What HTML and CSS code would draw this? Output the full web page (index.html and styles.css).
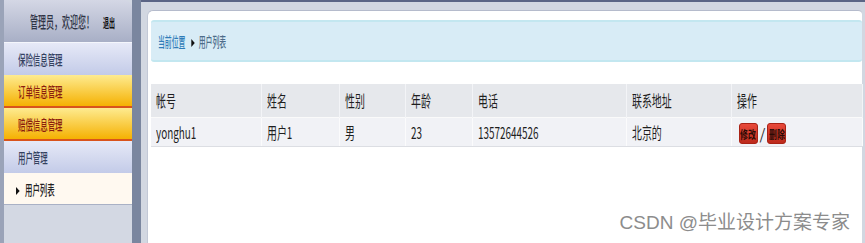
FILE: index.html
```html
<!DOCTYPE html>
<html lang="zh-CN">
<head>
    <meta charset="UTF-8">
    <title>用户列表</title>
    <link rel="stylesheet" href="styles.css">
</head>
<body>
    <div class="page">
        <aside class="sidebar">
            <div class="side-head">
                <span class="sq head-text">管理员，欢迎您！<a class="logout" href="#">退出</a></span>
            </div>
            <ul class="menu">
                <li class="menu-item blue first"><span class="sq">保险信息管理</span></li>
                <li class="menu-item orange"><span class="sq">订单信息管理</span></li>
                <li class="menu-item orange"><span class="sq">赔偿信息管理</span></li>
                <li class="menu-item blue"><span class="sq">用户管理</span></li>
                <li class="menu-item current"><span class="sq"><i class="tri"></i>用户列表</span></li>
            </ul>
        </aside>

        <div class="gutter"></div>

        <main class="main">
            <div class="content">
                <!-- 当前位置 -->
                <div class="crumb">
                    <span class="sq"><span class="here">当前位置</span><i class="tri crumb-tri"></i><span class="crumb-cur">用户列表</span></span>
                </div>

                <table class="user-table">
                    <colgroup>
                        <col style="width:110px">
                        <col style="width:78px">
                        <col style="width:66px">
                        <col style="width:67px">
                        <col style="width:154px">
                        <col style="width:105px">
                        <col style="width:131px">
                    </colgroup>
                    <tr>
                        <th><span class="sq">帐号</span></th>
                        <th><span class="sq">姓名</span></th>
                        <th><span class="sq">性别</span></th>
                        <th><span class="sq">年龄</span></th>
                        <th><span class="sq">电话</span></th>
                        <th><span class="sq">联系地址</span></th>
                        <th><span class="sq">操作</span></th>
                    </tr>
                    <tr>
                        <td><span class="sq">yonghu1</span></td>
                        <td><span class="sq">用户1</span></td>
                        <td><span class="sq">男</span></td>
                        <td><span class="sq">23</span></td>
                        <td><span class="sq">13572644526</span></td>
                        <td><span class="sq">北京的</span></td>
                        <td class="ops"><a class="btn" href="#"><span>修改</span></a><span class="slash">/</span><a class="btn" href="#"><span>删除</span></a></td>
                    </tr>
                </table>
            </div>
        </main>
    </div>

    <div class="watermark">CSDN @毕业设计方案专家</div>
</body>
</html>
```

FILE: styles.css
```css
* {
    box-sizing: border-box;
}
body {
    margin: 0;
    font-family: "Noto Sans CJK SC", "Microsoft YaHei", sans-serif;
    background: #7a869f;
    overflow: hidden;
}
.page {
    display: flex;
    height: 100vh;
}
/* 压扁的文字 */
.sq {
    display: inline-block;
    white-space: nowrap;
    transform-origin: left center;
}

/* 左侧菜单 */
.sidebar {
    flex: 0 0 132px;
    width: 132px;
    min-width: 0;
    overflow: hidden;
    border-left: 4px solid #9aa3b8;
    background: #d3d8e3;
    display: flex;
    flex-direction: column;
}
.side-head {
    height: 42px;
    border-top-right-radius: 8px;
    background: linear-gradient(#d4d7e5, #a8afc6);
    display: flex;
    align-items: center;
    padding-left: 26px;
}
.head-text {
    font-size: 16px;
    font-weight: 500;
    color: #2f3446;
    transform: scaleX(.5);
}
.logout {
    font-size: 12px;
    font-weight: bold;
    margin-left: 18px;
    color: #111;
    text-decoration: none;
}
.menu {
    list-style: none;
    margin: 0;
    padding: 0;
}
.menu-item {
    height: 32px;
    display: flex;
    align-items: center;
    padding-left: 14px;
    font-size: 14px;
    font-weight: 500;
}
.menu-item .sq {
    transform: scaleX(.53);
}
.menu-item.blue {
    background: linear-gradient(#e6e9f7, #c3cbe8);
    color: #34415f;
}
.menu-item.first {
    height: 33px;
    border-top: 1px solid #f4f6fc;
}
.menu-item.orange {
    height: 33px;
    background: linear-gradient(#feeb90, #f5b102);
    border-bottom: 2px solid #d9531c;
    color: #8c1e0e;
}
.menu-item.current {
    background: #fff9f0;
    border-bottom: 1px solid #a9b1c5;
    color: #222;
    padding-left: 12px;
}
.tri {
    display: inline-block;
    width: 0;
    height: 0;
    border-left: 7px solid #111;
    border-top: 4px solid transparent;
    border-bottom: 4px solid transparent;
    margin-right: 10px;
    vertical-align: middle;
}

.gutter {
    flex: 0 0 9px;
}

/* 右侧内容 */
.main {
    flex: 1;
    min-width: 0;
    background: #d2d7e1;
    border-top: 2px solid #5b6585;
    padding: 8px 3px 0 6px;
    display: flex;
    flex-direction: column;
}
.content {
    flex: 1;
    background: #fff;
    border-top: 1px solid #b5bbcc;
    border-left: 1px solid #c2c8d6;
    border-radius: 6px 4px 0 0;
    padding: 9px 0 0 3px;
}
.crumb {
    height: 42px;
    background: #d8ecf6;
    border-top: 2px solid #c3e7f0;
    border-bottom: 2px solid #c3e7f0;
    border-radius: 3px;
    display: flex;
    align-items: center;
    padding-left: 7px;
    font-size: 14px;
    font-weight: 500;
}
.crumb .sq {
    transform: scaleX(.49);
}
.here {
    color: #2f7cb8;
}
.crumb-tri {
    margin: 0 8px 0 12px;
}
.crumb-cur {
    color: #4d6c8a;
}

.user-table {
    margin-top: 22px;
    width: 100%;
    border-collapse: collapse;
    table-layout: fixed;
    font-size: 16px;
    color: #1e1e1e;
}
.user-table .sq {
    transform: scaleX(.62);
}
.user-table th {
    height: 33px;
    background: #e6e8ec;
    text-align: left;
    font-weight: normal;
    padding: 0 0 0 5px;
    border-right: 1px solid #f3f4f7;
}
.user-table td {
    height: 29px;
    background: #f1f2f6;
    padding: 0 0 0 5px;
    border-right: 1px solid #fbfbfc;
    border-top: 1px solid #fafafa;
    border-bottom: 1px solid #dcdee3;
}
.user-table td.ops {
    padding-left: 7px;
}
.btn {
    display: inline-flex;
    align-items: center;
    justify-content: center;
    width: 19px;
    height: 21px;
    vertical-align: middle;
    background: linear-gradient(#e8493a, #bd2a1c);
    border: 1px solid #a92316;
    border-radius: 3px;
    font-size: 11px;
    font-weight: bold;
    color: #2a0a05;
    text-decoration: none;
    overflow: hidden;
}
.btn span {
    display: inline-block;
    white-space: nowrap;
    transform: scaleX(.72);
}
.slash {
    margin: 0 2px;
    font-size: 15px;
    color: #333;
    vertical-align: middle;
}

.watermark {
    position: absolute;
    right: 15px;
    bottom: 11px;
    font-family: "Liberation Sans", "Noto Sans CJK SC", sans-serif;
    font-size: 19px;
    line-height: 1;
    color: #8c8c8c;
    text-shadow: 0 0 1px #fff;
}
```
